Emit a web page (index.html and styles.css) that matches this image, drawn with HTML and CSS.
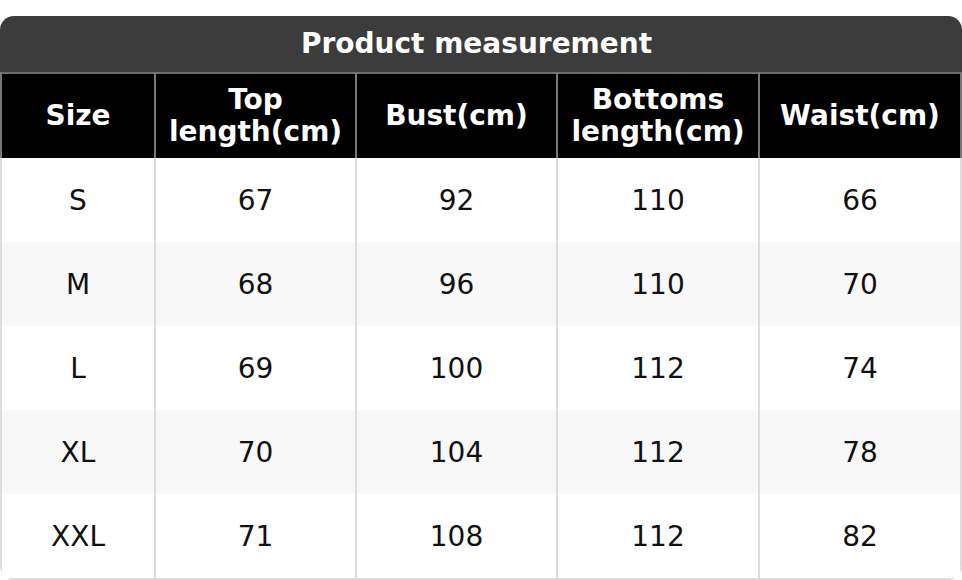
FILE: index.html
```html
<!DOCTYPE html>
<html>
<head>
<meta charset="utf-8">
<link rel="stylesheet" href="styles.css">
</head>
<body>
<div class="chart">
  <div class="title">Product measurement</div>
  <table class="sizes">
    <thead>
      <tr>
        <th class="c1">Size</th>
        <th class="c2">Top<br>length(cm)</th>
        <th class="c3">Bust(cm)</th>
        <th class="c4">Bottoms<br>length(cm)</th>
        <th class="c5">Waist(cm)</th>
      </tr>
    </thead>
    <tbody>
      <tr><td>S</td><td>67</td><td>92</td><td>110</td><td>66</td></tr>
      <tr class="alt"><td>M</td><td>68</td><td>96</td><td>110</td><td>70</td></tr>
      <tr><td>L</td><td>69</td><td>100</td><td>112</td><td>74</td></tr>
      <tr class="alt"><td>XL</td><td>70</td><td>104</td><td>112</td><td>78</td></tr>
      <tr><td>XXL</td><td>71</td><td>108</td><td>112</td><td>82</td></tr>
    </tbody>
  </table>
</div>
</body>
</html>
```
FILE: styles.css
```css
html, body {
  margin: 0;
  padding: 0;
  background: #fff;
}
body {
  padding-top: 16px;
  font-family: "DejaVu Sans", sans-serif;
}
.chart {
  width: 962px;
  border-radius: 14px;
  overflow: hidden;
}
.title {
  height: 56px;
  line-height: 56px;
  padding-right: 9px;
  background: #3c3c3c;
  color: #fff;
  font-weight: bold;
  font-size: 28px;
  text-align: center;
}
.sizes {
  width: 100%;
  border-collapse: separate;
  border-spacing: 0;
  table-layout: fixed;
  font-size: 28px;
}
.sizes th, .sizes td {
  box-sizing: border-box;
  padding: 0;
  text-align: center;
  vertical-align: middle;
}
.sizes th {
  height: 86px;
  background: #000;
  color: #fff;
  font-weight: bold;
  line-height: 32px;
  border-top: 2px solid #6e6e6e;
  border-right: 2px solid #777;
}
.sizes th:first-child {
  border-left: 2px solid #777;
}
.c1 { width: 156px; }
.c2 { width: 201px; }
.c3 { width: 201px; }
.c4 { width: 202px; }
.sizes td {
  height: 84px;
  color: #111;
  border-right: 2px solid #ddd;
}
.sizes td:first-child {
  border-left: 2px solid #ddd;
}
.sizes tr:last-child td {
  height: 86px;
  border-bottom: 2px solid #ddd;
}
.sizes tr.alt td {
  background: #f8f8f8;
}
```
